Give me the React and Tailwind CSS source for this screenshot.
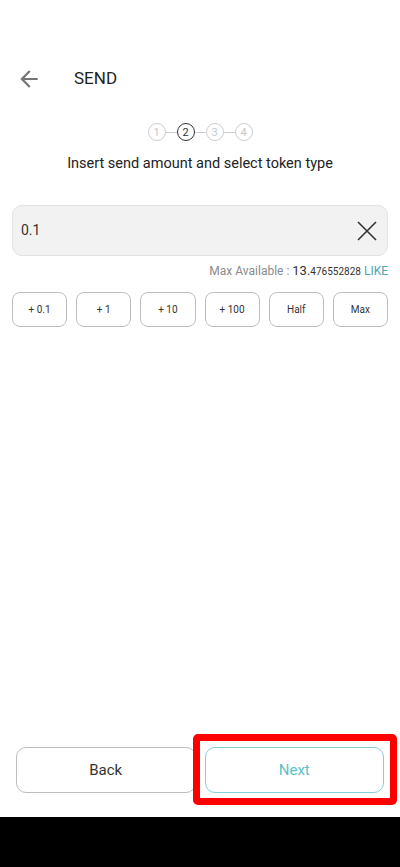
import React, { useState } from 'react';

const steps = [1, 2, 3, 4];
const quick = ['+ 0.1', '+ 1', '+ 10', '+ 100', 'Half', 'Max'];

const App = () => {
    const [amount, setAmount] = useState('0.1');

    return (
        <div className="h-[867px] w-full bg-white flex flex-col font-['Roboto','Liberation_Sans',sans-serif]">
            {/* Header */}
            <div className="mt-[57px] h-11 flex items-center">
                <svg className="ml-[16px] w-[26px] h-[26px]" viewBox="0 0 24 24" fill="#757575">
                    <path d="M20 11H7.83l5.59-5.59L12 4l-8 8 8 8 1.41-1.41L7.83 13H20v-2z" />
                </svg>
                <span className="ml-[32px] text-[17px] text-[#222]">SEND</span>
            </div>

            {/* Stepper */}
            <div className="mt-[22px] flex items-center justify-center">
                {steps.map((s, i) => (
                    <React.Fragment key={s}>
                        {i > 0 && <div className="w-[11px] h-px bg-[#c9ced3]" />}
                        <div
                            className={
                                s === 2
                                    ? 'w-[18px] h-[18px] rounded-full border border-[#333] flex items-center justify-center text-[11px] text-[#333] leading-none'
                                    : 'w-[18px] h-[18px] rounded-full border border-[#c9ced3] flex items-center justify-center text-[11px] text-[#c2c7cc] leading-none'
                            }
                        >
                            {s}
                        </div>
                    </React.Fragment>
                ))}
            </div>

            <p className="mt-[13px] text-center text-[14.5px] leading-5 text-[#222]">
                Insert send amount and select token type
            </p>

            {/* Amount input */}
            <div className="mx-3 mt-[31px] h-[51px] rounded-[10px] bg-[#f2f2f2] border border-[#e2e2e2] flex items-center pl-2 pr-[10px]">
                <input
                    value={amount}
                    onChange={(e) => setAmount(e.target.value)}
                    className="flex-1 bg-transparent outline-none text-[14px] text-[#333]"
                />
                <button onClick={() => setAmount('')} className="w-5 h-5 flex items-center justify-center">
                    <svg width="20" height="20" viewBox="0 0 20 20" stroke="#333" strokeWidth="1.6" fill="none">
                        <path d="M1 1L19 19M19 1L1 19" />
                    </svg>
                </button>
            </div>

            <div className="mx-3 mt-[7px] h-4 flex items-baseline justify-end text-[12px] leading-4">
                <span className="text-[#8a8a8a]">Max Available :&nbsp;</span>
                <span className="text-[13px] text-[#333]">13.</span>
                <span className="text-[10px] text-[#333]">476552828</span>
                <span className="text-[#4ba3b8]">&nbsp;LIKE</span>
            </div>

            {/* Quick amounts */}
            <div className="mx-3 mt-[13px] grid grid-cols-6 gap-[9px]">
                {quick.map((q) => (
                    <button
                        key={q}
                        className="h-[35px] rounded-lg border border-[#bdbdbd] text-[10px] text-[#333] bg-white"
                    >
                        {q}
                    </button>
                ))}
            </div>

            <div className="flex-1" />

            {/* Bottom buttons */}
            <div className="mx-4 grid grid-cols-2 gap-[9px]">
                <button className="h-[46px] rounded-[10px] border border-[#bdbdbd] text-[15px] text-[#333] bg-white">
                    Back
                </button>
                <div className="relative">
                    <button className="w-full h-[46px] rounded-[10px] border border-[#86d0d6] text-[15px] text-[#5cbfc9] bg-white">
                        Next
                    </button>
                    <div className="absolute -left-[12px] -right-[13px] -top-[13px] -bottom-[12px] border-[7px] border-[#ff0000] rounded-[5px] pointer-events-none" />
                </div>
            </div>

            <div className="h-6" />
            <div className="h-[50px] bg-black" />
        </div>
    );
};

export default App;
